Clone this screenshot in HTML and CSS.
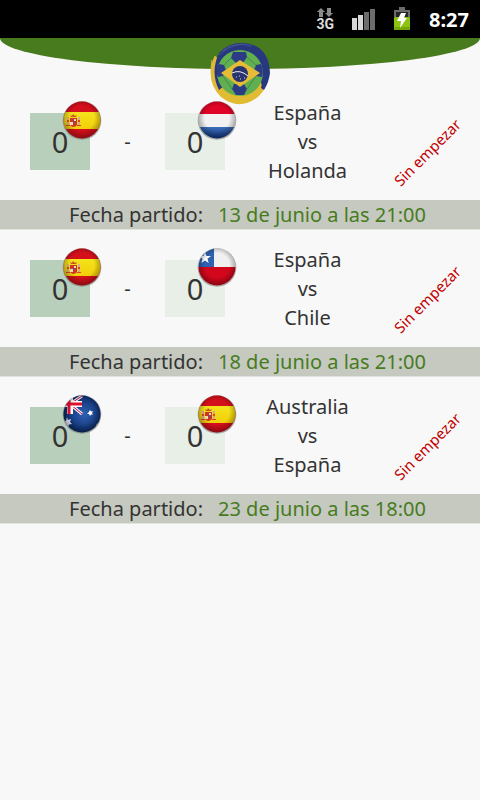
FILE: index.html
```
<!DOCTYPE html>
<html lang="es">
<head>
  <meta charset="UTF-8" />
  <meta name="viewport" content="width=device-width, initial-scale=1.0" />
  <title>Partidos</title>
  <link rel="stylesheet" href="styles.css">
</head>
<body>
  <!-- shared flag drawings -->
  <svg class="defs" width="0" height="0" aria-hidden="true">
    <defs>
      <clipPath id="round"><circle cx="20" cy="20" r="18.5" /></clipPath>
      <radialGradient id="shade" cx="50%" cy="45%" r="55%">
        <stop offset="0.6" stop-color="#000" stop-opacity="0" />
        <stop offset="1" stop-color="#000" stop-opacity="0.35" />
      </radialGradient>
      <linearGradient id="yellow" x1="0" y1="0" x2="0" y2="1">
        <stop offset="0" stop-color="#f4e31c" /><stop offset="1" stop-color="#f2cf08" />
      </linearGradient>
      <linearGradient id="blue" x1="0" y1="0" x2="0" y2="1">
        <stop offset="0" stop-color="#3d6fb8" /><stop offset="1" stop-color="#0a2f7c" />
      </linearGradient>
      <radialGradient id="navy" cx="55%" cy="50%" r="55%">
        <stop offset="0" stop-color="#2f62b5" /><stop offset="1" stop-color="#08245f" />
      </radialGradient>
    </defs>
    <symbol id="flag-es" viewBox="0 0 40 40">
      <circle cx="20" cy="20.5" r="19.3" fill="#777" opacity="0.6" />
      <g clip-path="url(#round)">
        <rect width="40" height="40" fill="#d4101c" />
        <rect y="12" width="40" height="17" fill="url(#yellow)" />
        <path d="M5 17h2v9h-2zM16 17h2v9h-2z" fill="#d9a890" />
        <path d="M5 20h2v2h-2zM16 20h2v2h-2zM4 25h4v1h-4zM15 25h4v1h-4z" fill="#d8442c" />
        <path d="M8 18h7v7q-3.500 4-7 0z" fill="#cf3426" />
        <path d="M8 22h3v3h-3zM12 19h2v2h-2z" fill="#eed9b0" />
        <path d="M9 17l-1-2 2 1 1-2 2 2 2-1-1 2z" fill="#c85420" />
        <circle cx="12" cy="22" r="1" fill="#54558f" />
      </g>
      <circle cx="20" cy="20" r="18.500" fill="url(#shade)" />
    </symbol>
    <symbol id="flag-nl" viewBox="0 0 40 40">
      <circle cx="20" cy="20.5" r="19.3" fill="#777" opacity="0.6" />
      <g clip-path="url(#round)">
        <rect width="40" height="40" fill="#f2f2f2" />
        <rect width="40" height="14" fill="#e00526" />
        <rect y="27" width="40" height="13" fill="url(#blue)" />
      </g>
      <circle cx="20" cy="20" r="18.500" fill="url(#shade)" />
    </symbol>
    <symbol id="flag-cl" viewBox="0 0 40 40">
      <circle cx="20" cy="20.5" r="19.3" fill="#777" opacity="0.6" />
      <g clip-path="url(#round)">
        <rect width="40" height="40" fill="#f0f0f0" />
        <rect width="17" height="20" fill="#2e62b0" />
        <rect y="20" width="40" height="20" fill="#d3071c" />
        <path d="M8 5l1.500 4h4.500l-3.600 2.800 1.300 4.200-3.700-2.600-3.700 2.600 1.300-4.200-3.600-2.800h4.500z" fill="#fff" />
      </g>
      <circle cx="20" cy="20" r="18.500" fill="url(#shade)" />
    </symbol>
    <symbol id="flag-au" viewBox="0 0 40 40">
      <circle cx="20" cy="20.5" r="19.3" fill="#777" opacity="0.6" />
      <g clip-path="url(#round)">
        <rect width="40" height="40" fill="url(#navy)" />
        <path d="M8 10L20 2M8 10L20 20M8 10L0 3" stroke="#eef" stroke-width="3" />
        <path d="M8 10L20 2M8 10L20 20" stroke="#d8102c" stroke-width="1" />
        <path d="M8 0v20M0 10h20" stroke="#fff" stroke-width="6" />
        <path d="M7 0v20M0 10h20" stroke="#e0102e" stroke-width="3" />
        <path d="M5 23l1 3 3-1-1 3 2 2-3 .5-1 3-2-2.500-3 1 1-3-2-2.500 4 .5z" fill="#eef" />
        <path d="M28 16l1 1.500 2-.5-1 2 1 1.500-2 0-1 1.500-1-2-2 0 1.500-1.500z" fill="#fff" />
        <path d="M34 31l2-2 1 2-2 1z" fill="#dde4f5" />
      </g>
      <circle cx="20" cy="20" r="18.500" fill="url(#shade)" />
    </symbol>
  </svg>

  <div class="statusbar">
    <div class="network">
      <svg width="16" height="10" viewBox="0 0 16 10"><path d="M4 0l4 4h-2v5h-4v-5h-2zM12 9l4-4h-2v-5h-4v5h-2z" fill="#8a8a8a" /></svg>
      <span>3G</span>
    </div>
    <svg width="23" height="21" viewBox="0 0 23 21">
      <path d="M0 9h5v12h-5zM6 6h5v15h-5z" fill="#d8d8d8" />
      <path d="M12 3h5v18h-5zM18 0h5v21h-5z" fill="#6c6c6c" />
    </svg>
    <svg width="18" height="24" viewBox="0 0 18 24">
      <path d="M6 0h6v3h5v7h-16v-7h5z" fill="#6b6b6b" />
      <rect x="3" y="5" width="12" height="5" fill="#252525" />
      <rect x="1" y="10" width="16" height="13" rx="1" fill="#8dc410" />
      <rect x="1" y="20" width="16" height="3" fill="#75a70c" />
      <path d="M8 6h5l-2 5h3l-7 10 1-7h-4z" fill="#fff" />
    </svg>
    <span class="clock">8:27</span>
  </div>

  <header class="header">
    <div class="arc"></div>
    <svg class="logo" viewBox="0 0 62 64">
      <path d="M6 14Q-5 38 12 55Q31 70 50 54Q62 42 58 22L31 31z" fill="#e1bb32" />
      <path d="M10 11Q22-2 41 2Q60 7 61 31Q60 40 55 48L52 46Q56 35 31 31L10 48Q1 30 10 11z" fill="#28387e" />
      <path d="M3 18Q0 35 7 46M6 14Q2 22 3 36" fill="none" stroke="#d9bb43" stroke-width="1" />
      <path d="M13 9Q26-1 43 4M10 13Q20 3 34 2" fill="none" stroke="#465592" stroke-width="1" />
      <circle cx="31" cy="31" r="23" fill="#62af50" />
      <path d="M24 10h13l1 5-4 6h-7l-5-5zM25 42h10l3 5-3 6h-8l-4-6zM10 22l5 1 2 5-3 6-5 1q-3-6 1-13zM52 22l-5 1-2 5 2 6 6 1q2-7-1-13z" fill="#2b3c85" />
      <path d="M22 16l-7 7M38 15l9 8M14 34l9 13M38 47l9-13" fill="none" stroke="#3f8a50" stroke-width="1" />
      <path d="M12 31L31 18 51 31 31 45z" fill="#e4bc35" />
      <circle cx="31" cy="32" r="8" fill="#28336f" />
      <path d="M23 31q8-4 16 3" fill="none" stroke="#e8edf0" stroke-width="1" />
      <path d="M27 35h1M31 37h1M35 36h1M30 34h1" stroke="#cbd2df" stroke-width="1" />
    </svg>
  </header>

  <main>
    <article class="match">
      <div class="result">
        <div class="score home">0<svg class="flag"><use href="#flag-es" /></svg></div>
        <span class="dash">-</span>
        <div class="score away">0<svg class="flag"><use href="#flag-nl" /></svg></div>
        <div class="teams"><div>España</div><div>vs</div><div>Holanda</div></div>
        <div class="state"><span>Sin empezar</span></div>
      </div>
      <div class="date"><span>Fecha partido:</span><time>13 de junio a las 21:00</time></div>
    </article>

    <article class="match">
      <div class="result">
        <div class="score home">0<svg class="flag"><use href="#flag-es" /></svg></div>
        <span class="dash">-</span>
        <div class="score away">0<svg class="flag"><use href="#flag-cl" /></svg></div>
        <div class="teams"><div>España</div><div>vs</div><div>Chile</div></div>
        <div class="state"><span>Sin empezar</span></div>
      </div>
      <div class="date"><span>Fecha partido:</span><time>18 de junio a las 21:00</time></div>
    </article>

    <article class="match">
      <div class="result">
        <div class="score home">0<svg class="flag"><use href="#flag-au" /></svg></div>
        <span class="dash">-</span>
        <div class="score away">0<svg class="flag"><use href="#flag-es" /></svg></div>
        <div class="teams"><div>Australia</div><div>vs</div><div>España</div></div>
        <div class="state"><span>Sin empezar</span></div>
      </div>
      <div class="date"><span>Fecha partido:</span><time>23 de junio a las 18:00</time></div>
    </article>
  </main>
</body>
</html>
```
FILE: styles.css
```
* {
  box-sizing: border-box;
}
body {
  font-family: "Noto Sans", "Open Sans", sans-serif;
  font-size: 20px;
  line-height: 29px;
  margin: 0;
  background: #f8f8f8;
  color: #333;
}
.defs {
  position: absolute;
}
.statusbar {
  display: flex;
  align-items: center;
  justify-content: flex-end;
  gap: 18px;
  height: 38px;
  padding-right: 11px;
  background: #000;
  color: #fff;
}
.network {
  display: flex;
  flex-direction: column;
  align-items: center;
  font: bold 14px/12px Roboto, sans-serif;
  color: #ddd;
}
.clock {
  font-size: 20px;
  font-weight: bold;
}
.header {
  position: relative;
  height: 45px;
}
.arc {
  height: 31px;
  background: #477b1e;
  border-radius: 0 0 50% 50% / 0 0 100% 100%;
}
.logo {
  position: absolute;
  top: 4px;
  left: 50%;
  width: 62px;
  height: 64px;
  transform: translateX(-50%);
}
.result {
  display: grid;
  grid-template-columns: 60px 75px 60px 1fr 75px;
  align-items: center;
  min-height: 117px;
  padding: 0 15px 0 30px;
  text-align: center;
}
.score {
  position: relative;
  height: 57px;
  font-size: 29px;
  line-height: 57px;
}
.home {
  background: #b8cfbc;
}
.away {
  background: #e7efe7;
}
.flag {
  position: absolute;
  top: -13px;
  left: 32px;
  width: 40px;
  height: 40px;
}
.state {
  display: flex;
  justify-content: center;
  padding-top: 22px;
  font-size: 15px;
  color: #c00000;
  white-space: nowrap;
}
.state span {
  transform: rotate(-45deg);
}
.date {
  display: flex;
  justify-content: center;
  gap: 15px;
  padding-left: 15px;
  background: #c5c9c0;
  border-bottom: 1px solid #e2e4df;
}
.date time {
  color: #477b1e;
}
```
